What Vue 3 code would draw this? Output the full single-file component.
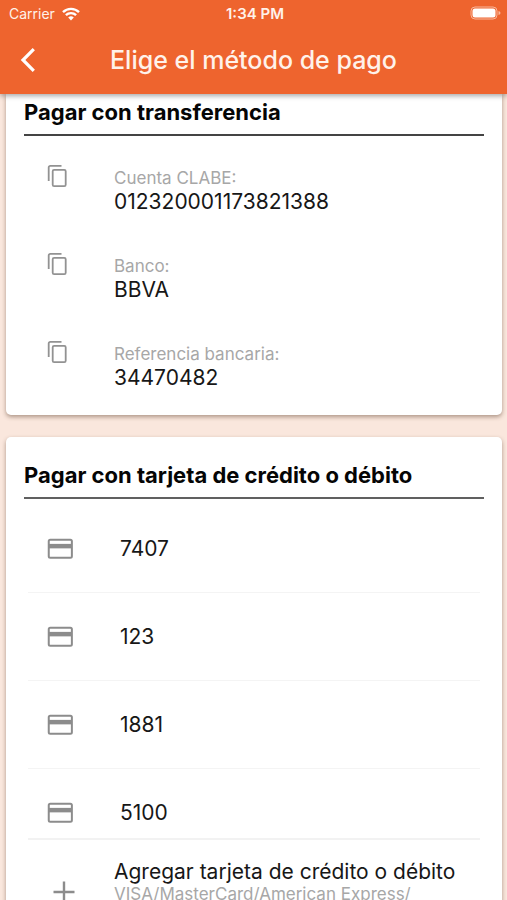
<script setup>
const transferFields = [
  { label: 'Cuenta CLABE:', value: '012320001173821388' },
  { label: 'Banco:', value: 'BBVA' },
  { label: 'Referencia bancaria:', value: '34470482' },
]

const cards = ['7407', '123', '1881', '5100']
</script>

<template>
  <div class="screen">
    <header class="app-bar">
      <div class="status">
        <div class="carrier">
          <span>Carrier</span>
          <svg class="wifi" viewBox="0 0 18 14" aria-hidden="true">
            <path d="M1 5.2a11.4 11.4 0 0 1 16 0M3.9 8.2a7.3 7.3 0 0 1 10.2 0" />
            <path class="dot" d="M9 13.4 6.2 10.5a4 4 0 0 1 5.6 0z" />
          </svg>
        </div>
        <span class="clock">1:34 PM</span>
        <svg class="battery" viewBox="0 0 31 15" aria-hidden="true">
          <rect class="shell" x="1" y="1" width="26" height="12" rx="4" />
          <rect x="2.5" y="2.5" width="23" height="9" rx="2.5" />
          <path class="cap" d="M28.5 5q2 .5 2 2t-2 2z" />
        </svg>
      </div>
      <div class="nav">
        <button class="back" type="button" aria-label="Atrás">
          <svg viewBox="0 0 16 24" aria-hidden="true"><path d="M13.8 1.2 3 12l10.800 10.800" /></svg>
        </button>
        <h1>Elige el método de pago</h1>
      </div>
    </header>

    <main class="content">
      <section class="card transfer">
        <h2>Pagar con transferencia</h2>
        <ul class="fields">
          <li v-for="field in transferFields" :key="field.label" class="field">
            <button class="copy" type="button" :aria-label="`Copiar ${field.label}`">
              <svg viewBox="0 0 24 24" aria-hidden="true">
                <path d="M15.5 1.9H4.300a1.600 1.600 0 0 0-1.600 1.600V17" />
                <rect x="6.700" y="5.900" width="13" height="16.200" rx="1.400" />
              </svg>
            </button>
            <div>
              <p class="hint">{{ field.label }}</p>
              <p class="value">{{ field.value }}</p>
            </div>
          </li>
        </ul>
      </section>

      <section class="card payment">
        <h2>Pagar con tarjeta de crédito o débito</h2>
        <ul class="card-list">
          <li v-for="number in cards" :key="number">
            <button class="card-row" type="button">
              <svg viewBox="0 0 24 24" aria-hidden="true">
                <rect x="3" y="4.500" width="18.500" height="14.500" rx="1.200" />
                <path d="M3 9.700h18.500" />
              </svg>
              <span class="value">{{ number }}</span>
            </button>
          </li>
        </ul>
        <button class="add" type="button">
          <svg viewBox="0 0 24 24" aria-hidden="true"><path d="M12 1.500v21M1.500 12h21" /></svg>
          <span>
            <span class="value">Agregar tarjeta de crédito o débito</span>
            <span class="hint">VISA/MasterCard/American Express/</span>
          </span>
        </button>
      </section>
    </main>
  </div>
</template>

<style>
body {
  background: #fae7dd;
}
</style>

<style scoped>
.screen {
  display: flex;
  flex-direction: column;
  height: 100vh;
  overflow: hidden;
  font-family: Inter, "Liberation Sans", sans-serif;
  color: #171717;
}

h1,
h2,
p,
ul {
  margin: 0;
  padding: 0;
  list-style: none;
}

button {
  padding: 0;
  border: 0;
  background: none;
  font: inherit;
  color: inherit;
  text-align: left;
}

svg {
  display: block;
  flex: none;
}

.app-bar {
  position: relative;
  z-index: 1;
  flex: none;
  background: #ee642e;
  color: #fff2ea;
  box-shadow: 0 2px 5px rgba(0, 0, 0, 0.35);
}

.status {
  display: grid;
  grid-template-columns: 1fr auto 1fr;
  align-items: center;
  height: 27px;
  padding: 0 6px 0 9px;
  font-size: 14px;
}

.carrier {
  display: flex;
  align-items: center;
  gap: 7px;
}

.wifi {
  width: 18px;
  height: 14px;
  fill: none;
  stroke: #fff;
  stroke-width: 2.4;
}

.wifi .dot {
  fill: #fff;
  stroke: none;
}

.clock {
  font-size: 15px;
  font-weight: 600;
}

.battery {
  justify-self: end;
  width: 31px;
  height: 15px;
  fill: #fff;
}

.battery .shell {
  fill: none;
  stroke: #f8b79c;
}

.battery .cap {
  fill: #f8b79c;
}

.nav {
  display: grid;
  grid-template-columns: 56px 1fr 56px;
  align-items: center;
  height: 65px;
  padding-bottom: 2px;
}

.back svg {
  width: 16px;
  height: 24px;
  margin-left: 20px;
  fill: none;
  stroke: #fff;
  stroke-width: 3.2;
}

h1 {
  font-size: 25px;
  font-weight: 500;
  line-height: 32px;
  text-align: center;
  white-space: nowrap;
}

.content {
  flex: 1;
  min-height: 0;
  overflow: hidden;
  padding: 0 5px 0 6px;
}

.card {
  padding: 0 18px;
  background: #fff;
  border-radius: 5px;
  box-shadow: 0 2px 4px rgba(80, 50, 30, 0.45);
}

.transfer {
  margin-bottom: 22px;
  padding-bottom: 13px;
  border-radius: 0 0 5px 5px;
}

.payment {
  padding-top: 20px;
  padding-bottom: 24px;
}

h2 {
  padding: 4px 0 8px;
  border-bottom: 2px solid #606060;
  font-size: 22px;
  font-weight: 700;
  line-height: 28px;
  color: #050505;
}

.transfer h2 {
  border-bottom-color: #444;
}

.fields {
  padding-top: 2px;
}

.field {
  display: grid;
  grid-template-columns: 90px 1fr;
  align-items: start;
  height: 88px;
}

.copy svg {
  width: 24px;
  height: 24px;
  margin: 26px 0 0 22px;
  fill: none;
  stroke: #929292;
  stroke-width: 1.8;
}

.field > div {
  padding-top: 29px;
}

.hint {
  display: block;
  font-size: 17px;
  line-height: 22px;
  color: #a7a7a7;
}

.value {
  display: block;
  font-size: 21px;
  line-height: 24px;
}

.field .value {
  padding-top: 1px;
}

.card-list {
  height: 333px;
  margin: 6px 4px 0;
  overflow: hidden;
  border-bottom: 2px solid #f2f2f2;
}

.card-list li {
  border-bottom: 1px solid #f4f4f4;
}

.card-row {
  display: grid;
  grid-template-columns: 92px 1fr;
  align-items: center;
  width: 100%;
  height: 87px;
}

.card-row svg {
  width: 30px;
  height: 30px;
  margin-left: 17px;
  fill: none;
  stroke: #8c8c8c;
  stroke-width: 1.6;
}

.card-row path {
  stroke-width: 3.6;
}

.add {
  display: grid;
  grid-template-columns: 90px 1fr;
  align-items: center;
  width: 100%;
  padding-top: 20px;
}

.add .hint {
  line-height: 20px;
}

.add svg {
  width: 24px;
  height: 24px;
  margin: 20px 0 0 28px;
  fill: none;
  stroke: #8c8c8c;
  stroke-width: 2.4;
}
</style>
